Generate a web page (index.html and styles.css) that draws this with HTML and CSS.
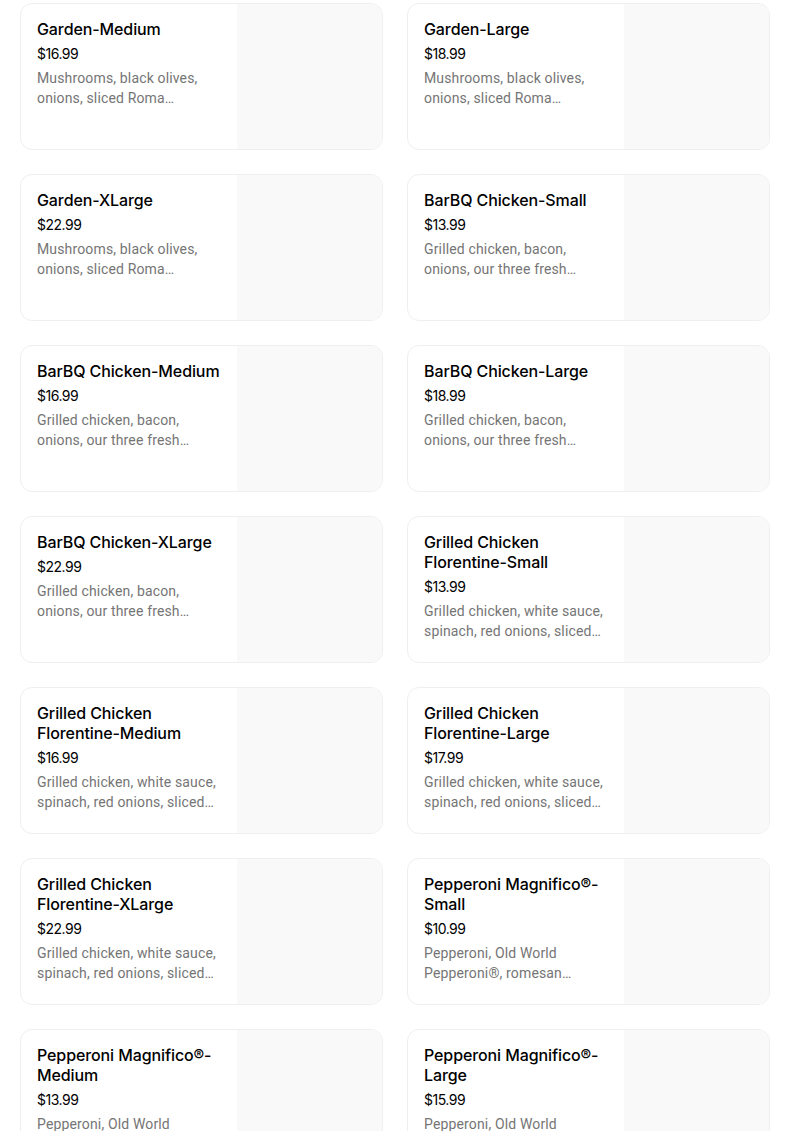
FILE: index.html
```html
<!DOCTYPE html>
<html>
<head>
<meta charset="utf-8">
<link rel="stylesheet" href="styles.css">
</head>
<body>
<div class="grid">
  <div class="card"><div class="info"><div class="title">Garden-Medium</div><div class="price">$16.99</div><div class="desc">Mushrooms, black olives, onions, sliced Roma tomatoes, green peppers</div></div><div class="thumb"></div></div>
  <div class="card"><div class="info"><div class="title">Garden-Large</div><div class="price">$18.99</div><div class="desc">Mushrooms, black olives, onions, sliced Roma tomatoes, green peppers</div></div><div class="thumb"></div></div>
  <div class="card"><div class="info"><div class="title">Garden-XLarge</div><div class="price">$22.99</div><div class="desc">Mushrooms, black olives, onions, sliced Roma tomatoes, green peppers</div></div><div class="thumb"></div></div>
  <div class="card"><div class="info"><div class="title">BarBQ Chicken-Small</div><div class="price">$13.99</div><div class="desc">Grilled chicken, bacon, onions, our three fresh cheeses and BBQ sauce</div></div><div class="thumb"></div></div>
  <div class="card"><div class="info"><div class="title">BarBQ Chicken-Medium</div><div class="price">$16.99</div><div class="desc">Grilled chicken, bacon, onions, our three fresh cheeses and BBQ sauce</div></div><div class="thumb"></div></div>
  <div class="card"><div class="info"><div class="title">BarBQ Chicken-Large</div><div class="price">$18.99</div><div class="desc">Grilled chicken, bacon, onions, our three fresh cheeses and BBQ sauce</div></div><div class="thumb"></div></div>
  <div class="card"><div class="info"><div class="title">BarBQ Chicken-XLarge</div><div class="price">$22.99</div><div class="desc">Grilled chicken, bacon, onions, our three fresh cheeses and BBQ sauce</div></div><div class="thumb"></div></div>
  <div class="card"><div class="info"><div class="title">Grilled Chicken Florentine-Small</div><div class="price">$13.99</div><div class="desc">Grilled chicken, white sauce, spinach, red onions, sliced Roma tomatoes</div></div><div class="thumb"></div></div>
  <div class="card"><div class="info"><div class="title">Grilled Chicken Florentine-Medium</div><div class="price">$16.99</div><div class="desc">Grilled chicken, white sauce, spinach, red onions, sliced Roma tomatoes</div></div><div class="thumb"></div></div>
  <div class="card"><div class="info"><div class="title">Grilled Chicken Florentine-Large</div><div class="price">$17.99</div><div class="desc">Grilled chicken, white sauce, spinach, red onions, sliced Roma tomatoes</div></div><div class="thumb"></div></div>
  <div class="card"><div class="info"><div class="title">Grilled Chicken Florentine-XLarge</div><div class="price">$22.99</div><div class="desc">Grilled chicken, white sauce, spinach, red onions, sliced Roma tomatoes</div></div><div class="thumb"></div></div>
  <div class="card"><div class="info"><div class="title">Pepperoni Magnifico®-Small</div><div class="price">$10.99</div><div class="desc">Pepperoni, Old World Pepperoni®, romesan seasoning and mozzarella</div></div><div class="thumb"></div></div>
  <div class="card"><div class="info"><div class="title">Pepperoni Magnifico®-Medium</div><div class="price">$13.99</div><div class="desc">Pepperoni, Old World Pepperoni®, romesan seasoning and mozzarella</div></div><div class="thumb"></div></div>
  <div class="card"><div class="info"><div class="title">Pepperoni Magnifico®-Large</div><div class="price">$15.99</div><div class="desc">Pepperoni, Old World Pepperoni®, romesan seasoning and mozzarella</div></div><div class="thumb"></div></div>
</div>
</body>
</html>
```
FILE: styles.css
```css
html, body {
  margin: 0;
  padding: 0;
  background: #ffffff;
  overflow: hidden;
}
body {
  font-family: Inter, "Noto Sans", sans-serif;
  color: #000000;
}
.grid {
  display: grid;
  grid-template-columns: 363px 363px;
  column-gap: 24px;
  row-gap: 24px;
  padding: 3px 0 0 20px;
}
.card {
  display: flex;
  height: 147px;
  box-sizing: border-box;
  border: 1px solid #efefef;
  border-radius: 12px;
  overflow: hidden;
  background: #ffffff;
}
.info {
  width: 216px;
  box-sizing: border-box;
  padding: 15px 0 0 16px;
  flex: none;
}
.title {
  font-size: 16px;
  font-weight: 500;
  line-height: 20px;
  letter-spacing: -0.1px;
  width: 186px;
}
.price {
  margin-top: 5px;
  font-size: 14px;
  line-height: 20px;
  letter-spacing: -0.5px;
  color: #000000;
}
.desc {
  margin-top: 4px;
  font-family: Roboto, "Noto Sans", sans-serif;
  font-size: 14px;
  line-height: 20px;
  letter-spacing: 0.15px;
  color: #757575;
  width: 190px;
  display: -webkit-box;
  -webkit-line-clamp: 2;
  -webkit-box-orient: vertical;
  overflow: hidden;
}
.thumb {
  flex: 1;
  background: #f9f9f9;
}
```
